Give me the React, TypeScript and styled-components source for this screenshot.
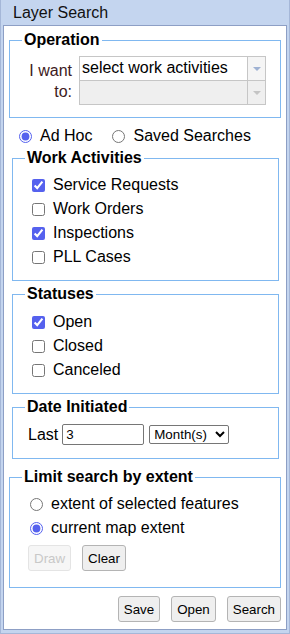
import styled, { createGlobalStyle } from 'styled-components';

const GlobalStyle = createGlobalStyle`
  html, body {
    margin: 0;
    padding: 0;
    background: #ffffff;
  }
  body {
    font-family: "Liberation Sans", Arial, sans-serif;
    font-size: 16px;
    color: #000;
  }
`;

const Frame = styled.div`
  box-sizing: border-box;
  width: 290px;
  height: 634px;
  display: flex;
  flex-direction: column;
  background: #c4d5ef;
  border: 1px solid #a5b7d8;
  border-top: none;
  padding: 0 2px 3px 2px;
`;

const TitleBar = styled.div`
  height: 25px;
  line-height: 25px;
  padding-left: 10px;
  font-size: 16px;
  color: #111;
`;

const Panel = styled.div`
  flex: 1;
  box-sizing: border-box;
  background: #fff;
  border: 1px solid #8d9fc5;
  padding: 5px 5px 0 5px;
  display: flex;
  flex-direction: column;
`;

const Fieldset = styled.fieldset<{ $bottom?: number }>`
  margin: 0;
  padding: 0 12px ${(p) => p.$bottom ?? 11}px 12px;
  border: 1px solid #80b8f0;
  min-width: 0;
`;

const Legend = styled.legend`
  padding: 0 2px;
  font-weight: bold;
  font-size: 16px;
  line-height: 18px;
`;

const OperationBody = styled.div`
  display: flex;
  align-items: center;
  padding-top: 7px;
  padding-bottom: 1px;
`;

const WantLabel = styled.div`
  width: 50px;
  text-align: right;
  line-height: 21px;
  color: #3d1a22;
  margin-right: 7px;
`;

const ComboStack = styled.div`
  display: flex;
  flex-direction: column;
  width: 187px;
  border: 1px solid #c6c6c6;
  box-sizing: border-box;
`;

const ComboRow = styled.div<{ $disabled?: boolean }>`
  display: flex;
  height: 23px;
  background: ${(p) => (p.$disabled ? '#efefef' : '#fff')};
  & + & {
    border-top: 1px solid #c6c6c6;
  }
`;

const ComboText = styled.div`
  flex: 1;
  padding-left: 2px;
  line-height: 22px;
  white-space: nowrap;
  overflow: hidden;
`;

const ComboArrow = styled.div<{ $disabled?: boolean }>`
  width: 17px;
  border-left: 1px solid #c6c6c6;
  background: ${(p) => (p.$disabled ? '#efefef' : '#f5f5f5')};
  display: flex;
  align-items: center;
  justify-content: center;
  &::after {
    content: '';
    border-left: 4px solid transparent;
    border-right: 4px solid transparent;
    border-top: 4px solid ${(p) => (p.$disabled ? '#c4c4c4' : '#9fb2d3')};
  }
`;

const ModeRow = styled.div`
  display: flex;
  align-items: center;
  height: 24px;
  margin: 6px 0 1px 10px;
`;

const Choice = styled.label<{ $gap?: number }>`
  display: flex;
  align-items: center;
  height: 24px;
  gap: 8px;
  margin-right: ${(p) => p.$gap ?? 0}px;
  white-space: nowrap;
`;

const Radio = styled.input.attrs({ type: 'radio' })`
  width: 13px;
  height: 13px;
  margin: 0;
  accent-color: #5561ee;
`;

const Check = styled.input.attrs({ type: 'checkbox' })`
  width: 13px;
  height: 13px;
  margin: 0;
  accent-color: #5561ee;
`;

const Options = styled.div<{ $indent: number; $top: number }>`
  display: flex;
  flex-direction: column;
  padding: ${(p) => p.$top}px 0 0 ${(p) => p.$indent}px;
`;

const DateRow = styled.div`
  display: flex;
  align-items: center;
  padding: 8px 0 0 3px;
  height: 21px;
`;

const NumberInput = styled.input`
  box-sizing: border-box;
  width: 82px;
  height: 21px;
  margin: 0 5px 0 4px;
  padding: 1px 3px;
  border: 1px solid #767676;
  border-radius: 2px;
  font: 13.33px "Liberation Sans", Arial, sans-serif;
`;

const UnitSelect = styled.select`
  box-sizing: border-box;
  width: 80px;
  height: 19px;
  font: 13.33px "Liberation Sans", Arial, sans-serif;
  border: 1px solid #767676;
  border-radius: 2px;
  background: #fff;
  color: #000;
`;

const ButtonRow = styled.div<{ $end?: boolean }>`
  display: flex;
  gap: 11px;
  justify-content: ${(p) => (p.$end ? 'flex-end' : 'flex-start')};
`;

const Button = styled.button`
  box-sizing: border-box;
  height: 26px;
  padding: 0 5px;
  font: 13.33px "Liberation Sans", Arial, sans-serif;
  color: #000;
  background: #efefef;
  border: 1px solid #b4b4b4;
  border-radius: 3px;
  &:disabled {
    color: #c8c8c8;
    background: #f6f6f6;
    border-color: #e4e4e4;
  }
`;

const InnerGroup = styled.div`
  display: flex;
  flex-direction: column;
  gap: 4px;
  padding: 0 2px 0 3px;
  margin-bottom: 9px;
`;

export default function App() {
  return (
    <>
      <GlobalStyle />
      <Frame>
        <TitleBar>Layer Search</TitleBar>
        <Panel>
          <Fieldset>
            <Legend>Operation</Legend>
            <OperationBody>
              <WantLabel>I want to:</WantLabel>
              <ComboStack>
                <ComboRow>
                  <ComboText>select work activities</ComboText>
                  <ComboArrow />
                </ComboRow>
                <ComboRow $disabled>
                  <ComboText />
                  <ComboArrow $disabled />
                </ComboRow>
              </ComboStack>
            </OperationBody>
          </Fieldset>

          <ModeRow>
            <Choice $gap={20}>
              <Radio name="mode" defaultChecked />
              Ad Hoc
            </Choice>
            <Choice>
              <Radio name="mode" />
              Saved Searches
            </Choice>
          </ModeRow>

          <InnerGroup>
            <Fieldset>
              <Legend>Work Activities</Legend>
              <Options $indent={7} $top={6}>
                <Choice>
                  <Check defaultChecked />
                  Service Requests
                </Choice>
                <Choice>
                  <Check />
                  Work Orders
                </Choice>
                <Choice>
                  <Check defaultChecked />
                  Inspections
                </Choice>
                <Choice>
                  <Check />
                  PLL Cases
                </Choice>
              </Options>
            </Fieldset>

            <Fieldset>
              <Legend>Statuses</Legend>
              <Options $indent={7} $top={7}>
                <Choice>
                  <Check defaultChecked />
                  Open
                </Choice>
                <Choice>
                  <Check />
                  Closed
                </Choice>
                <Choice>
                  <Check />
                  Canceled
                </Choice>
              </Options>
            </Fieldset>

            <Fieldset $bottom={13}>
              <Legend>Date Initiated</Legend>
              <DateRow>
                Last
                <NumberInput defaultValue="3" />
                <UnitSelect defaultValue="m">
                  <option value="d">Day(s)</option>
                  <option value="w">Week(s)</option>
                  <option value="m">Month(s)</option>
                  <option value="y">Year(s)</option>
                </UnitSelect>
              </DateRow>
            </Fieldset>
          </InnerGroup>

          <Fieldset $bottom={16}>
            <Legend>Limit search by extent</Legend>
            <Options $indent={8} $top={6}>
              <Choice>
                <Radio name="extent" />
                extent of selected features
              </Choice>
              <Choice>
                <Radio name="extent" defaultChecked />
                current map extent
              </Choice>
            </Options>
            <ButtonRow style={{ marginTop: 5, marginLeft: 6 }}>
              <Button disabled>Draw</Button>
              <Button>Clear</Button>
            </ButtonRow>
          </Fieldset>

          <ButtonRow $end style={{ marginTop: 8 }}>
            <Button>Save</Button>
            <Button>Open</Button>
            <Button>Search</Button>
          </ButtonRow>
        </Panel>
      </Frame>
    </>
  );
}
